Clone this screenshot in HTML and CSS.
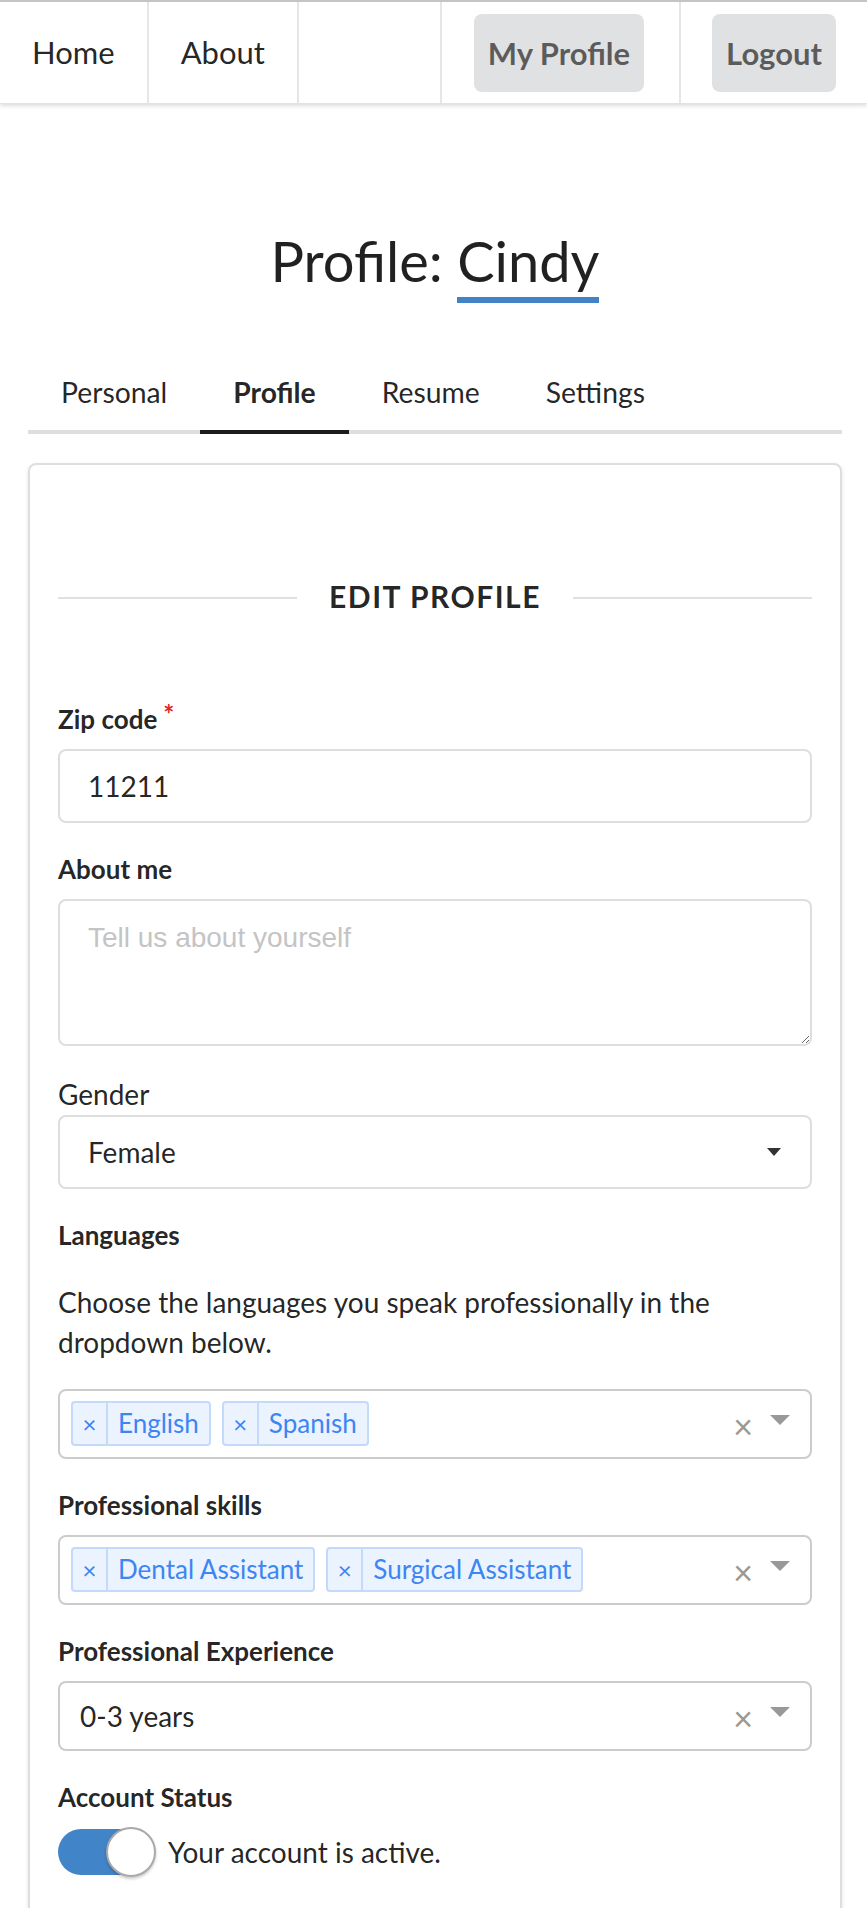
FILE: index.html
```html
<!DOCTYPE html>
<html lang="en">
<head>
<meta charset="utf-8">
<title>Profile: Cindy</title>
<link rel="stylesheet" href="styles.css">
</head>
<body>
<nav class="topnav">
  <a class="nav-item nav-left" href="#">Home</a>
  <a class="nav-item nav-left" href="#">About</a>
  <div class="nav-right">
    <div class="nav-item nav-r1"><a class="nav-btn" href="#">My Profile</a></div>
    <div class="nav-item nav-r2"><a class="nav-btn" href="#">Logout</a></div>
  </div>
</nav>
<main class="page">
  <h1 class="title">Profile: <a class="name" href="#">Cindy</a></h1>
  <div class="tabs">
    <a class="tab" href="#">Personal</a>
    <a class="tab active" href="#">Profile</a>
    <a class="tab" href="#">Resume</a>
    <a class="tab" href="#">Settings</a>
  </div>
  <section class="card">
    <div class="divider"><span class="line"></span><h4 class="divider-text">Edit Profile</h4><span class="line"></span></div>
    <form class="form">
      <div class="field">
        <label class="label">Zip code<span class="req">*</span></label>
        <input class="input" type="text" value="11211">
      </div>
      <div class="field">
        <label class="label">About me</label>
        <textarea class="textarea" placeholder="Tell us about yourself"></textarea>
      </div>
      <div class="field">
        <label class="plain-label">Gender</label>
        <div class="dropdown"><span class="dropdown-text">Female</span><span class="caret"></span></div>
      </div>
      <div class="field">
        <label class="label">Languages</label>
        <p class="help">Choose the languages you speak professionally in the dropdown below.</p>
        <div class="select">
          <div class="values">
            <span class="tag"><span class="tag-x">×</span><span class="tag-label">English</span></span>
            <span class="tag"><span class="tag-x">×</span><span class="tag-label">Spanish</span></span>
          </div>
          <span class="clear">×</span><span class="arrow-zone"><span class="arrow"></span></span>
        </div>
      </div>
      <div class="field">
        <label class="label">Professional skills</label>
        <div class="select">
          <div class="values">
            <span class="tag"><span class="tag-x">×</span><span class="tag-label">Dental Assistant</span></span>
            <span class="tag"><span class="tag-x">×</span><span class="tag-label">Surgical Assistant</span></span>
          </div>
          <span class="clear">×</span><span class="arrow-zone"><span class="arrow"></span></span>
        </div>
      </div>
      <div class="field">
        <label class="label">Professional Experience</label>
        <div class="select single">
          <div class="single-value">0-3 years</div>
          <span class="clear">×</span><span class="arrow-zone"><span class="arrow"></span></span>
        </div>
      </div>
      <div class="field">
        <label class="label">Account Status</label>
        <div class="toggle-row">
          <span class="toggle"><span class="track"></span><span class="knob"></span></span>
          <span class="toggle-text">Your account is active.</span>
        </div>
      </div>
    </form>
  </section>
</main>
</body>
</html>
```

FILE: styles.css
```css
html, body {
  margin: 0;
  padding: 0;
  background: #fff;
}
body {
  font-family: Lato, "Liberation Sans", sans-serif;
  font-size: 28px;
  line-height: 40px;
  color: rgba(0, 0, 0, 0.87);
}
a {
  color: inherit;
  text-decoration: none;
}

/* top navigation */
.topnav {
  display: flex;
  height: 104px;
  box-sizing: border-box;
  border-top: 2px solid #c4c4c4;
  border-bottom: 1px solid #e2e2e2;
  box-shadow: 0 2px 4px rgba(34, 36, 38, 0.15);
  background: #fff;
}
.nav-item {
  display: flex;
  align-items: center;
  font-size: 31px;
  line-height: 31px;
}
.nav-left {
  padding: 0 32px;
  border-right: 2px solid #e6e6e6;
}
.nav-right {
  margin-left: auto;
  display: flex;
}
.nav-r1 {
  border-left: 2px solid #e6e6e6;
  padding: 0 35px 0 32px;
}
.nav-r2 {
  border-left: 2px solid #e6e6e6;
  padding: 0 31px 0 31px;
}
.nav-btn {
  display: block;
  background: #e0e1e2;
  color: rgba(0, 0, 0, 0.6);
  font-weight: 700;
  font-size: 31px;
  line-height: 34px;
  padding: 22px 14px;
  border-radius: 8px;
}

/* page */
.page {
  padding: 0 25px 0 28px;
}
.title {
  margin: 125px 0 0;
  height: 75px;
  font-size: 56px;
  line-height: 64px;
  font-weight: 400;
  text-align: center;
  color: rgba(0, 0, 0, 0.87);
}
.name {
  display: inline-block;
  padding-bottom: 4px;
  border-bottom: 6px solid #4183c4;
}

/* tabs */
.tabs {
  display: flex;
  margin-top: 50px;
  border-bottom: 4px solid #dedede;
}
.tab {
  padding: 24px 33px;
  font-size: 28.3px;
  line-height: 28px;
  margin-bottom: -4px;
  border-bottom: 4px solid transparent;
}
.tab.active {
  font-weight: 700;
  border-bottom-color: #1b1c1d;
}

/* card */
.card {
  margin-top: 29px;
  border: 2px solid #dedede;
  border-radius: 8px;
  box-shadow: 0 2px 4px rgba(34, 36, 38, 0.12);
  padding: 28px 28px 160px;
}
.divider {
  display: flex;
  align-items: center;
  height: 40px;
  margin-top: 83px;
}
.line {
  flex: 1;
  height: 2px;
  margin-top: 4px;
  background: #e0e0e0;
}
.divider-text {
  margin: 0 32px;
  font-size: 30px;
  line-height: 40px;
  font-weight: 700;
  text-transform: uppercase;
  letter-spacing: 0.05em;
  color: rgba(0, 0, 0, 0.87);
}

/* form */
.form {
  margin-top: 85px;
}
.field {
  margin-bottom: 28px;
}
.label {
  display: block;
  font-size: 26px;
  line-height: 37px;
  font-weight: 700;
  margin-bottom: 11px;
  color: rgba(0, 0, 0, 0.87);
}
.req {
  color: #db2828;
  margin-left: 6px;
  font-size: 26px;
  vertical-align: 5px;
  line-height: 0;
}
.plain-label {
  display: block;
  font-size: 28px;
  line-height: 40px;
  margin-bottom: 1px;
}
.input {
  display: block;
  width: 100%;
  box-sizing: border-box;
  height: 74px;
  padding: 0 28px;
  border: 2px solid #dedede;
  border-radius: 8px;
  font-family: Lato, "Liberation Sans", sans-serif;
  font-size: 28px;
  color: rgba(0, 0, 0, 0.87);
  outline: none;
  margin: 0;
}
.textarea {
  display: block;
  width: 100%;
  box-sizing: border-box;
  height: 147px;
  padding: 18px 28px;
  border: 2px solid #dedede;
  border-radius: 8px;
  font-family: "Liberation Sans", Arial, sans-serif;
  font-size: 28px;
  line-height: 38px;
  outline: none;
  margin: 0;
}
.textarea::placeholder {
  color: #c4c4c4;
}
.dropdown {
  display: flex;
  align-items: center;
  justify-content: space-between;
  height: 74px;
  box-sizing: border-box;
  padding: 0 29px 0 28px;
  border: 2px solid #dedede;
  border-radius: 8px;
}
.dropdown-text {
  line-height: 34px;
}
.caret {
  width: 0;
  height: 0;
  border-left: 7px solid transparent;
  border-right: 7px solid transparent;
  border-top: 8px solid #333;
}
.help {
  margin: 28px 0 27px;
  font-size: 28px;
  line-height: 40px;
}

/* react-select like */
.select {
  display: flex;
  align-items: center;
  min-height: 70px;
  box-sizing: border-box;
  border: 2px solid #cccccc;
  border-radius: 8px;
}
.values {
  flex: 1;
  display: flex;
  flex-wrap: wrap;
  align-self: flex-start;
  padding: 0 0 11px 0;
}
.tag {
  display: inline-flex;
  margin: 10px 0 0 11px;
  border: 2px solid #c3dafa;
  background: #ebf3fe;
  border-radius: 4px;
  color: #3d85f2;
  font-size: 26px;
  line-height: 37px;
}
.tag-x {
  width: 35px;
  box-sizing: border-box;
  text-align: center;
  padding: 2px 0;
  border-right: 2px solid #c3dafa;
  font-size: 24px;
}
.tag-label {
  padding: 2px 10px;
}
.clear {
  width: 34px;
  text-align: center;
  color: #999;
  font-size: 34px;
  line-height: 34px;
  margin-top: 4px;
}
.arrow-zone {
  width: 50px;
  padding-right: 20px;
  box-sizing: border-box;
  display: flex;
  justify-content: flex-end;
  margin-bottom: 8px;
}
.arrow {
  width: 0;
  height: 0;
  border-left: 10px solid transparent;
  border-right: 10px solid transparent;
  border-top: 10px solid #999;
}
.single-value {
  flex: 1;
  padding-left: 20px;
  line-height: 40px;
}

/* toggle */
.toggle-row {
  display: flex;
  align-items: center;
  gap: 12px;
}
.toggle {
  position: relative;
  width: 98px;
  height: 50px;
  flex: none;
}
.track {
  position: absolute;
  left: 0;
  top: 2px;
  width: 96px;
  height: 46px;
  border-radius: 23px;
  background: #4284c8;
}
.knob {
  position: absolute;
  right: 0;
  top: 0;
  width: 50px;
  height: 50px;
  box-sizing: border-box;
  border-radius: 50%;
  background: #fff;
  border: 2px solid #a9a9a9;
  box-shadow: 0 2px 3px rgba(0, 0, 0, 0.2);
}
.toggle-text {
  font-size: 28px;
  line-height: 40px;
}
```
